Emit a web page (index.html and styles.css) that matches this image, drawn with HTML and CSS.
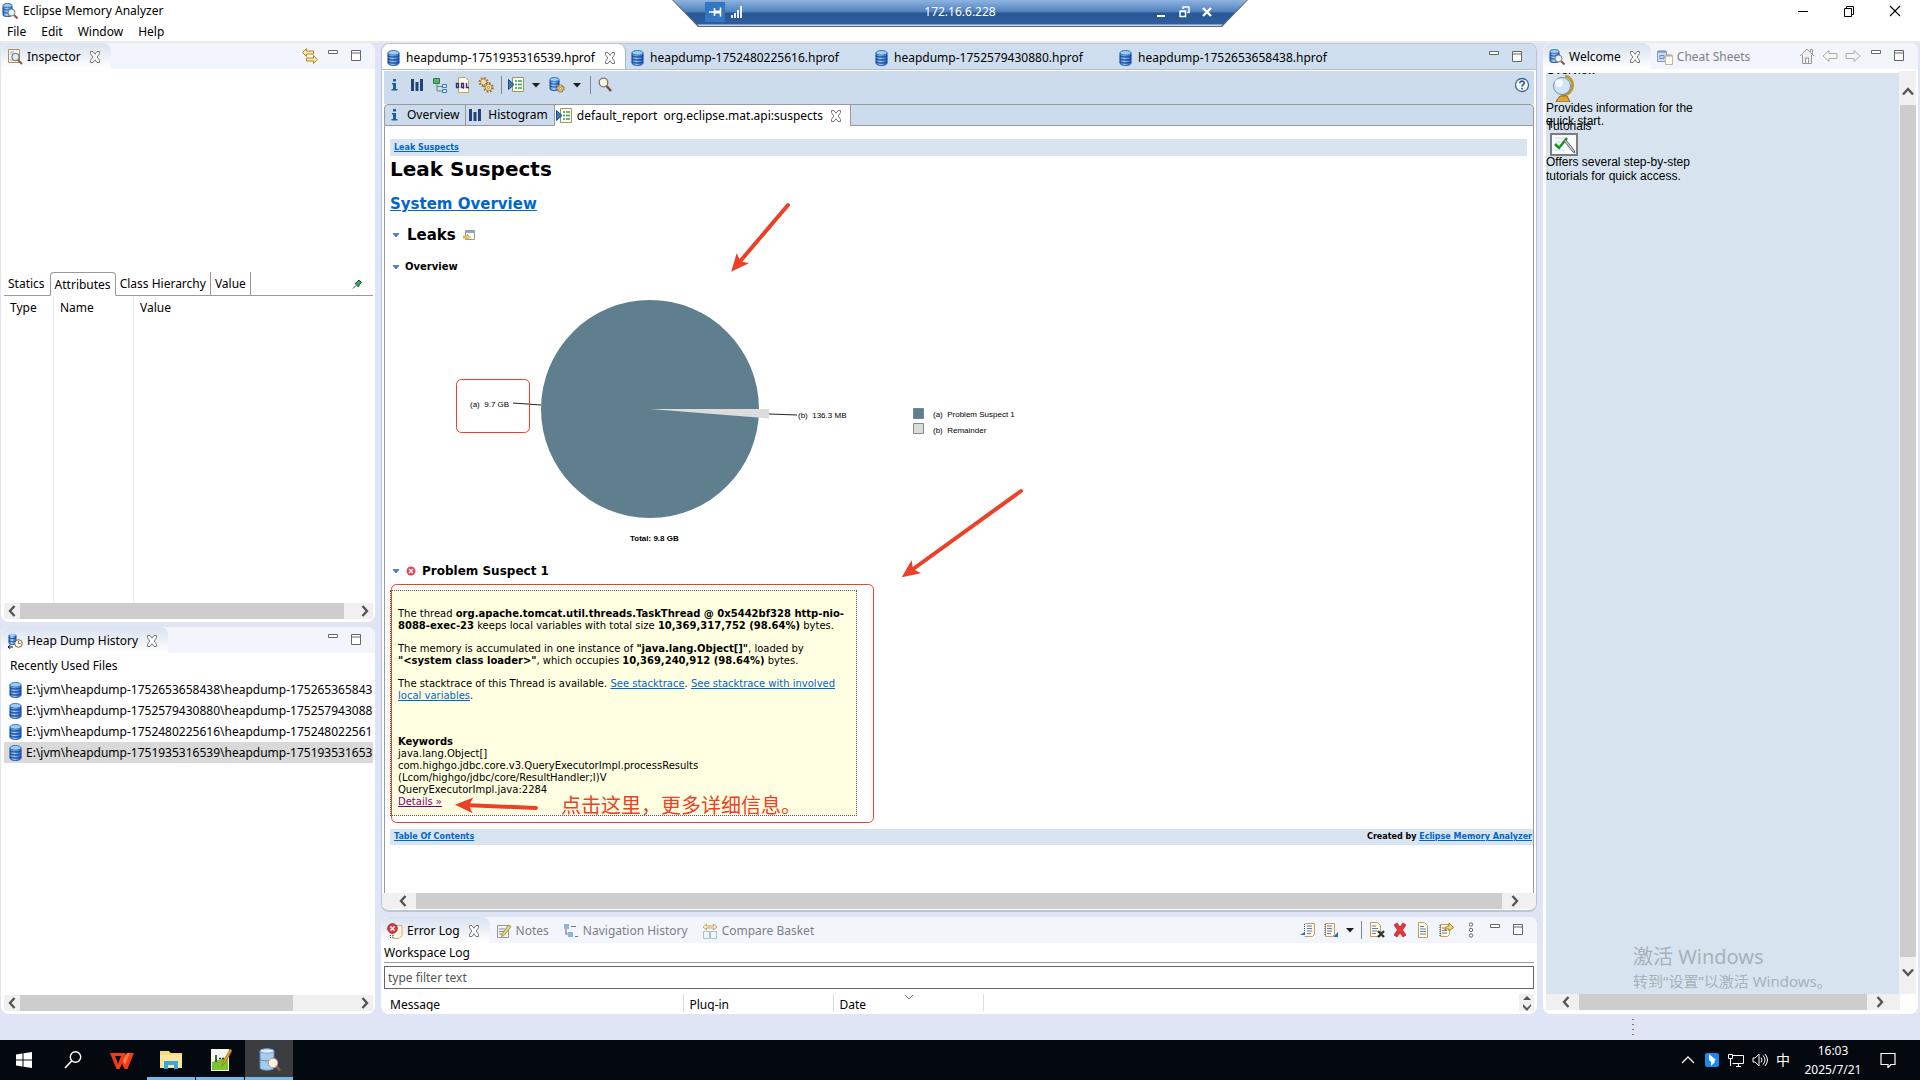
FILE: index.html
```html
<!DOCTYPE html>
<html lang="en">
<head>
<meta charset="utf-8">
<title>Eclipse Memory Analyzer</title>
<link rel="stylesheet" href="styles.css">
</head>
<body>
<svg class="sprite" aria-hidden="true">
  <defs>
    <linearGradient id="g-db" x1="0" x2="1"><stop offset="0" stop-color="#2f74d0"/><stop offset=".4" stop-color="#a9d4f7"/><stop offset="1" stop-color="#1b55b8"/></linearGradient>
    <symbol id="db" viewBox="0 0 16 16"><path d="M2 3v10c0 3.300 11 3.300 11 0V3z" fill="url(#g-db)" stroke="#1a50ae"/><path d="M2 5.500c0 2 11 2 11 0M2 8.500c0 2 11 2 11 0M2 11.500c0 2 11 2 11 0" fill="none" stroke="#174a9f" stroke-width="1.300"/><ellipse cx="7.500" cy="2.800" rx="5.500" ry="2.300" fill="#9fcdee" stroke="#2f74b8"/></symbol>
    <symbol id="dbfind" viewBox="0 0 16 16"><path d="M1 3v9c0 2 9 2 9 0V3z" fill="url(#g-db)" stroke="#1a50ae"/><path d="M1 5.500c0 2 9 2 9 0M1 8.500c0 2 9 2 9 0" fill="none" stroke="#174a9f"/><ellipse cx="5.500" cy="2.500" rx="4.500" ry="2" fill="#9fcdee" stroke="#2f74b8"/><path d="M12 12l3.500 3.500" stroke="#8a5a3a" stroke-width="2"/><circle cx="9.500" cy="9.500" r="3.500" fill="#e3f1fb" stroke="#777"/></symbol>
    <symbol id="dbgear" viewBox="0 0 16 16"><path d="M1 3v9c0 2 9 2 9 0V3z" fill="url(#g-db)" stroke="#1a50ae"/><path d="M1 5.500c0 2 9 2 9 0M1 8.500c0 2 9 2 9 0" fill="none" stroke="#174a9f"/><ellipse cx="5.500" cy="2.500" rx="4.500" ry="2" fill="#9fcdee" stroke="#2f74b8"/><circle cx="11.500" cy="11.500" r="3.700" fill="#f3d79a" stroke="#8b6a2d" stroke-dasharray="1.900 1"/><circle cx="11.500" cy="11.500" r="2.800" fill="#f3d79a" stroke="#a87a30"/><circle cx="11.500" cy="11.500" r="1" fill="#fff" stroke="#8b6a2d" stroke-width=".6"/></symbol>
    <symbol id="dbclock" viewBox="0 0 16 16"><path d="M2 2v8c0 2 7 2 7 0V2z" fill="url(#g-db)" stroke="#1a50ae"/><path d="M2 4.500c0 1.500 7 1.500 7 0M2 7.500c0 1.500 7 1.500 7 0" fill="none" stroke="#174a9f"/><ellipse cx="5.500" cy="1.800" rx="3.500" ry="1.300" fill="#9fcdee"/><circle cx="11.500" cy="10.500" r="3.800" fill="#fff8e4" stroke="#7d6540"/><path d="M11.500 8v2.500h2" fill="none" stroke="#7d6540"/><path d="M1 14h5M3.500 12L1 14l2.500 2" fill="none" stroke="#111"/></symbol>
    <symbol id="inspect" viewBox="0 0 16 16"><path d="M1.500.5h11v13h-11z" fill="#eef4fa" stroke="#b0914e"/><path d="M3 3h4M3 5h3M3 11h4" stroke="#9cb4cf"/><path d="M11 11l4 4" stroke="#8a5a3a" stroke-width="2"/><circle cx="8.500" cy="8" r="3.700" fill="#dfeefa" stroke="#666"/></symbol>
    <symbol id="x" viewBox="0 0 16 16"><path d="M3.500 2.500H6l2 2.800 2-2.800h2.500v2.200L10.200 8l2.300 3.300v2.200H10l-2-2.800-2 2.800H3.500v-2.200L5.800 8 3.500 4.700z" fill="#fff" stroke="#777"/></symbol>
    <symbol id="min" viewBox="0 0 16 16"><path d="M3.500 2.500h9v3h-9z" fill="#fff" stroke="#666"/></symbol>
    <symbol id="max" viewBox="0 0 16 16"><path d="M3.500 2.500h9v10h-9zM3.500 5h9" fill="#fff" stroke="#666"/></symbol>
    <symbol id="sync" viewBox="0 0 16 16"><path d="M.5 4.500L4.500.5v2.500h7v3h-7v2.500zM15.500 11.500l-4-4V10h-7v3h7v2.500z" fill="#fce9a8" stroke="#b4862b"/></symbol>
    <symbol id="info" viewBox="0 0 16 16"><path d="M7 2h3v2.500H7zM6 6h4v6h1.500v1.500h-6V12H7V7.500H6z" fill="#1f5f9f"/></symbol>
    <symbol id="hist" viewBox="0 0 16 16"><path d="M2 2h3v12H2zM6.500 5h3v9h-3zM11 2h3v12h-3z" fill="#23427a"/></symbol>
    <symbol id="tree" viewBox="0 0 16 16"><path d="M5 7v7h5M5 9.500h5" fill="none" stroke="#5e8d7a"/><path d="M1.500 1.500h6v5h-6z" fill="#58b368" stroke="#2d7d46"/><path d="M10.500 7.500h4v3h-4zM10.500 12.500h4v3h-4z" fill="#dcebfa" stroke="#3a78c0"/></symbol>
    <symbol id="oql" viewBox="0 0 16 16"><path d="M3.500.5h7l3 3v12h-10z" fill="#fffdf4" stroke="#c2a562"/><path d="M1.500 6.500h2v4h-2zM6.500 6.500h2v4h-2zM9 11.500L8 10M11.500 6v4.500H14" fill="none" stroke="#35306b" stroke-width="1.400"/></symbol>
    <symbol id="gears" viewBox="0 0 16 16"><g fill="#f6dfae" stroke="#9a7434"><circle cx="5.500" cy="5" r="4" stroke-width="2" stroke-dasharray="1.600 1.540"/><circle cx="5.500" cy="5" r="3" stroke-width=".8"/><circle cx="10.500" cy="10.500" r="4.300" stroke-width="2" stroke-dasharray="1.700 1.680"/><circle cx="10.500" cy="10.500" r="3.300" stroke-width=".8"/><circle cx="10.500" cy="10.500" r="1.200" fill="#fff" stroke-width=".8"/></g></symbol>
    <symbol id="report" viewBox="0 0 16 16"><path d="M4.500.5h11v14h-11z" fill="#fbfdf4" stroke="#a8935a"/><path d="M7 4h2M10 4h4M7 7.500h2M10 7.500h4M7 11h2M10 11h4" stroke="#3c9c60" stroke-width="1.500"/><path d="M.5 2.500L6 7.500l-5.500 5z" fill="#3e78b2" stroke="#1d4c80"/></symbol>
    <symbol id="search" viewBox="0 0 16 16"><path d="M9.500 9l4.500 5" stroke="#7b4b32" stroke-width="2.500"/><circle cx="6.500" cy="5.500" r="4.300" fill="#fbf6dd" stroke="#777" stroke-width="1.300"/></symbol>
    <symbol id="caret" viewBox="0 0 8 8"><path d="M0 2h8L4 6.500z" fill="#1d1d1d"/></symbol>
    <symbol id="help" viewBox="0 0 16 16"><circle cx="8" cy="8" r="6.500" fill="#fff" stroke="#356a9c" stroke-width="1.300"/><path d="M5.800 6.300c0-3 4.600-2.800 4.400-.1C10.100 7.600 8 7.800 8 9.500M8 10.700v1.700" fill="none" stroke="#28598e" stroke-width="1.700"/></symbol>
    <symbol id="pin" viewBox="0 0 16 16"><path d="M4 12.500L7 9.500" stroke="#333"/><path d="M6 7.500l3.500 3.500 1-2.500 2-2-2.500-2.500-2 2z" fill="#37a05a" stroke="#17663a"/></symbol>
    <symbol id="home" viewBox="0 0 16 16"><path d="M1 8l7-7 7 7M3.500 7v8.500h9V7M11.500 4V1.500h2V6M6.500 15v-5h3v5" fill="#eee" stroke="#999"/></symbol>
    <symbol id="back" viewBox="0 0 16 16"><path d="M1 8l6-5.500V5.500h8v5H7v3z" fill="#f6f6f8" stroke="#aaa"/></symbol>
    <symbol id="fwd" viewBox="0 0 16 16"><path d="M15 8L9 2.500V5.500H1v5h8v3z" fill="#f6f6f8" stroke="#aaa"/></symbol>
    <symbol id="sheets" viewBox="0 0 16 16"><path d="M.5 2.500h9v10h-9z" fill="#c9daf4" stroke="#7e9bd0"/><path d="M2 1v3M4 1v3M6 1v3M8 1v3M3 6.500h4v3H3z" fill="none" stroke="#6f86bb"/><path d="M8.500 6.500h7v9h-7z" fill="#fbfaf5" stroke="#c6b893"/><path d="M10 5v3M12 5v3M14 5v3" stroke="#b5a47a"/></symbol>
    <symbol id="errlog" viewBox="0 0 16 16"><path d="M4 2.500h11v10l-3 3H6z" fill="#fcf4de" stroke="#d1b16a"/><circle cx="5.500" cy="5.500" r="4.800" fill="#d53c45" stroke="#a8222e"/><path d="M3.500 3.500l4 4M7.500 3.500l-4 4" stroke="#fff" stroke-width="1.500"/><path d="M3.500 12v3M6 12v3" stroke="#2c58a8" stroke-dasharray="1 1"/></symbol>
    <symbol id="notes" viewBox="0 0 16 16"><path d="M1.500 2.500h11v12h-11z" fill="#f4f4f4" stroke="#999"/><path d="M3 6h6M3 8.500h5M3 11h4" stroke="#889"/><path d="M6 11.500L12.500 2l2.500 1.500-7 9-2.500 1z" fill="#ecdc7a" stroke="#9a9448"/></symbol>
    <symbol id="nav" viewBox="0 0 16 16"><path d="M1 1h5v5H1zM5 9h5v5H5z" fill="#8fb2de"/><path d="M3 6v5h2M8 3.500h5M12 13.500h3" fill="none" stroke="#777" stroke-width="1.200"/></symbol>
    <symbol id="basket" viewBox="0 0 16 16"><path d="M1 4l3.500-3v2h7V1L15 4l-3.500 3V5h-7v2z" fill="#fbf0cf" stroke="#c8a55e"/><path d="M1.500 8.500h6v7h-6zM8.500 8.500h6v7h-6z" fill="#eef7fb" stroke="#a9c5cc"/></symbol>
    <symbol id="logout" viewBox="0 0 16 16"><path d="M5.500 1.500h9v11l-2 2h-8" fill="#fcf6e2" stroke="#c0a25c"/><path d="M7 4h5M7 6.500h5M7 9h5M7 11.500h4" stroke="#5b7fb8"/><path d="M4.500 2v10" stroke="#25477f" stroke-dasharray="1 1"/><path d="M0 13h5v-3z" fill="#2a6db4"/></symbol>
    <symbol id="login" viewBox="0 0 16 16"><path d="M2.500 1.500h9v11l-2 2h-7z" fill="#fcf6e2" stroke="#c0a25c"/><path d="M4 4h5M4 6.500h5M4 9h5M4 11.500h4" stroke="#5b7fb8"/><path d="M2 2v12" stroke="#25477f" stroke-dasharray="1 1"/><path d="M15 10v5h-5z" fill="#2a6db4"/></symbol>
    <symbol id="clear" viewBox="0 0 16 16"><path d="M1.500.5h7l3 3v11h-10z" fill="#fffaea" stroke="#bf9f56"/><path d="M3 4h4M3 6.500h6M3 9h5M3 11.500h4" stroke="#5b7fb8"/><path d="M9 9l6 6M15 9l-6 6" stroke="#333" stroke-width="2.400"/></symbol>
    <symbol id="del" viewBox="0 0 16 16"><path d="M2 3l3-2 3 4 3-4 3 2-3.500 5 3.500 5-3 2-3-4-3 4-3-2 3.500-5z" fill="#e2383c" stroke="#b5202a" stroke-width=".7"/></symbol>
    <symbol id="doc" viewBox="0 0 16 16"><path d="M3.500.5h6l3 3v12h-9z" fill="#fffaea" stroke="#bf9f56"/><path d="M5 4.500h4M5 7h6M5 9.500h6M5 12h6" stroke="#5b7fb8"/></symbol>
    <symbol id="export" viewBox="0 0 16 16"><path d="M2.500 2.500h9v10l-2 2h-7z" fill="#fcf6e2" stroke="#c0a25c"/><path d="M4 6h4M4 8.500h5M4 11h5" stroke="#5b7fb8"/><path d="M2 3v11" stroke="#25477f" stroke-dasharray="1 1"/><path d="M7 8c0-3 2-4 4-4V1l4.500 4.500L11 9V7c-2 0-3 0-4 1z" fill="#f6d56e" stroke="#a97f1e"/></symbol>
    <symbol id="dots" viewBox="0 0 16 16"><g fill="#fff" stroke="#666"><circle cx="8" cy="2.500" r="1.700"/><circle cx="8" cy="8" r="1.700"/><circle cx="8" cy="13.500" r="1.700"/></g></symbol>
    <symbol id="al" viewBox="0 0 16 16"><path d="M10.500 3L6 8l4.500 5" fill="none" stroke="#555" stroke-width="2.400"/></symbol>
    <symbol id="ar" viewBox="0 0 16 16"><path d="M5.500 3L10 8l-4.500 5" fill="none" stroke="#555" stroke-width="2.400"/></symbol>
    <symbol id="au" viewBox="0 0 16 16"><path d="M3 10.500L8 5l5 5.500" fill="none" stroke="#555" stroke-width="2.400"/></symbol>
    <symbol id="ad" viewBox="0 0 16 16"><path d="M3 5.500L8 11l5-5.500" fill="none" stroke="#555" stroke-width="2.400"/></symbol>
    <symbol id="tw" viewBox="0 0 8 8"><path d="M1 2.500h6L4 6z" fill="#3e83bd" stroke="#2a5f94" stroke-width=".6"/></symbol>
    <marker id="head" refX="-9" refY="0" markerWidth="20" markerHeight="20" markerUnits="userSpaceOnUse" orient="auto" overflow="visible"><path d="M0 0L-18-8-14 0-18 8z" fill="#ec4127"/></marker>
  </defs>
</svg>

<header class="titlebar">
  <div class="title"><svg class="i"><use href="#dbfind"/></svg><span>Eclipse Memory Analyzer</span></div>
  <div class="wincontrols">
    <button aria-label="Minimize"><svg class="i" viewBox="0 0 16 16"><path d="M3 8.500h10" stroke="#000"/></svg></button>
    <button aria-label="Restore"><svg class="i" viewBox="0 0 16 16"><path d="M3.500 5.500h7v8h-7zM5.500 5V3.500h7v8H11" fill="none" stroke="#000"/></svg></button>
    <button aria-label="Close"><svg class="i" viewBox="0 0 16 16"><path d="M3 3l10 10M13 3L3 13" stroke="#000" stroke-width="1.200"/></svg></button>
  </div>
</header>
<nav class="menubar"><button>File</button><button>Edit</button><button>Window</button><button>Help</button></nav>

<div class="remote">
  <div class="remote-in">
    <div class="remote-l"><button class="pinned" aria-label="Pin"><svg class="i" viewBox="0 0 16 16"><path d="M2 8h5M7.500 4v8M8 8h5M13.500 3.500v9" stroke="#fff" stroke-width="1.600"/><path d="M8 6.500h6v3H8z" fill="#fff"/></svg></button><svg class="i" viewBox="0 0 16 16"><path d="M3 14v-3M6 14V9M9 14V6M12 14V2" stroke="#fff" stroke-width="1.800"/></svg></div>
    <span>172.16.6.228</span>
    <div class="remote-r">
      <button aria-label="Minimize session"><svg class="i" viewBox="0 0 16 16"><path d="M4 12h8" stroke="#fff" stroke-width="2"/></svg></button>
      <button aria-label="Restore session"><svg class="i" viewBox="0 0 16 16"><path d="M4 7.500h5.500v5H4zM7 5V3h6v5.500h-2M4 7h6" fill="none" stroke="#fff" stroke-width="1.500"/></svg></button>
      <button aria-label="Close session"><svg class="i" viewBox="0 0 16 16"><path d="M4 4l8 8M12 4l-8 8" stroke="#fff" stroke-width="2.400"/></svg></button>
    </div>
  </div>
</div>

<main class="workbench">
  <div class="col left">
    <section class="pane inspector">
      <div class="tabbar"><button class="tab on"><svg class="i"><use href="#inspect"/></svg>Inspector<svg class="i x"><use href="#x"/></svg></button>
        <div class="tools"><button aria-label="Link"><svg class="i"><use href="#sync"/></svg></button><button aria-label="Minimize view"><svg class="i"><use href="#min"/></svg></button><button aria-label="Maximize view"><svg class="i"><use href="#max"/></svg></button></div></div>
      <div class="blank"></div>
      <div class="subtabs"><button>Statics</button><button class="on">Attributes</button><button>Class Hierarchy</button><button class="ends">Value</button><svg class="i push"><use href="#pin"/></svg></div>
      <table class="attrs"><thead><tr><th>Type</th><th>Name</th><th>Value</th></tr></thead><tbody><tr><td></td><td></td><td></td></tr></tbody></table>
      <div class="hscroll"><svg class="i"><use href="#al"/></svg><div class="track"><div class="thumb t1"></div></div><svg class="i"><use href="#ar"/></svg></div>
    </section>
    <section class="pane history">
      <div class="tabbar"><button class="tab on"><svg class="i"><use href="#dbclock"/></svg>Heap Dump History<svg class="i x"><use href="#x"/></svg></button>
        <div class="tools"><button aria-label="Minimize view"><svg class="i"><use href="#min"/></svg></button><button aria-label="Maximize view"><svg class="i"><use href="#max"/></svg></button></div></div>
      <h2>Recently Used Files</h2>
      <ul>
        <li><svg class="i"><use href="#db"/></svg>E:\jvm\heapdump-1752653658438\heapdump-1752653658438.hprof</li>
        <li><svg class="i"><use href="#db"/></svg>E:\jvm\heapdump-1752579430880\heapdump-1752579430880.hprof</li>
        <li><svg class="i"><use href="#db"/></svg>E:\jvm\heapdump-1752480225616\heapdump-1752480225616.hprof</li>
        <li class="on"><svg class="i"><use href="#db"/></svg>E:\jvm\heapdump-1751935316539\heapdump-1751935316539.hprof</li>
      </ul>
      <div class="hscroll end"><svg class="i"><use href="#al"/></svg><div class="track"><div class="thumb t2"></div></div><svg class="i"><use href="#ar"/></svg></div>
    </section>
  </div>

  <div class="col center">
    <section class="pane editor">
      <div class="tabbar files">
        <button class="tab file on"><svg class="i"><use href="#db"/></svg>heapdump-1751935316539.hprof<svg class="i x"><use href="#x"/></svg></button>
        <button class="tab file"><svg class="i"><use href="#db"/></svg>heapdump-1752480225616.hprof</button>
        <button class="tab file"><svg class="i"><use href="#db"/></svg>heapdump-1752579430880.hprof</button>
        <button class="tab file"><svg class="i"><use href="#db"/></svg>heapdump-1752653658438.hprof</button>
        <div class="tools"><button aria-label="Minimize editor"><svg class="i"><use href="#min"/></svg></button><button aria-label="Maximize editor"><svg class="i"><use href="#max"/></svg></button></div>
      </div>
      <div class="toolbar">
        <button aria-label="Overview"><svg class="i"><use href="#info"/></svg></button><button aria-label="Histogram"><svg class="i"><use href="#hist"/></svg></button><button aria-label="Dominator tree"><svg class="i"><use href="#tree"/></svg></button><button aria-label="OQL"><svg class="i"><use href="#oql"/></svg></button><button aria-label="Thread overview"><svg class="i"><use href="#gears"/></svg></button>
        <i class="sep"></i>
        <button class="drop" aria-label="Run report"><svg class="i"><use href="#report"/></svg><svg class="c"><use href="#caret"/></svg></button><button class="drop" aria-label="Query browser"><svg class="i"><use href="#dbgear"/></svg><svg class="c"><use href="#caret"/></svg></button>
        <i class="sep"></i>
        <button aria-label="Find"><svg class="i"><use href="#search"/></svg></button>
        <button class="push" aria-label="Help"><svg class="i"><use href="#help"/></svg></button>
      </div>
      <div class="pagetabs">
        <button><svg class="i"><use href="#info"/></svg>Overview</button><button><svg class="i"><use href="#hist"/></svg>Histogram</button><button class="on"><svg class="i"><use href="#report"/></svg>default_report&nbsp; org.eclipse.mat.api:suspects<svg class="i x"><use href="#x"/></svg></button>
      </div>
      <article class="report">
        <div class="crumb"><a href="#leaks">Leak Suspects</a></div>
        <h1>Leak Suspects</h1>
        <h2><a href="#system">System Overview</a></h2>
        <h2 class="fold" id="leaks"><svg class="c"><use href="#tw"/></svg>Leaks<svg class="m" viewBox="0 0 12 12"><path d="M2.500 1.500h9v9h-9z" fill="#fff" stroke="#a99a76"/><path d="M2 2h10v2H2z" fill="#7fa9d8"/><path d="M0 7h4V5l3.500 3L4 11V9H0z" fill="#f3cf6b" stroke="#b98a2c" stroke-width=".6"/></svg></h2>
        <h4 class="fold"><svg class="c"><use href="#tw"/></svg>Overview</h4>
        <svg class="chart" width="700" height="260" viewBox="390 290 700 260" role="img" aria-label="Leak suspects by retained size">
          <circle cx="650" cy="409" r="109" fill="#607f8e"/>
          <path d="M650 409H769V418.500z" fill="#dcdcdc"/>
          <path d="M513 403l28 2M769 414l28 1" stroke="#222"/>
          <g class="lbl"><text x="470" y="407">(a)&#160; 9.7 GB</text><text x="798" y="418">(b)&#160; 136.3 MB</text><text x="933" y="417">(a)&#160; Problem Suspect 1</text><text x="933" y="433">(b)&#160; Remainder</text><text x="630" y="541" font-weight="bold">Total: 9.8 GB</text></g>
          <path d="M913.500 408.500h10v10h-10z" fill="#607f8e" stroke="#6d8a98"/><path d="M913.500 423.500h10v10h-10z" fill="#dcdcdc" stroke="#888"/>
        </svg>
        <h3 class="fold"><svg class="c"><use href="#tw"/></svg><svg class="m" viewBox="0 0 12 12"><circle cx="6" cy="6" r="4.500" fill="#de4a54"/><path d="M4 4l4 4M8 4L4 8" stroke="#fff" stroke-width="1.300"/></svg>Problem Suspect 1</h3>
        <div class="suspect">
          <p>The thread <b>org.apache.tomcat.util.threads.TaskThread @ 0x5442bf328 http-nio-<br>8088-exec-23</b> keeps local variables with total size <b>10,369,317,752 (98.64%)</b> bytes.</p>
          <p>The memory is accumulated in one instance of <b>"java.lang.Object[]"</b>, loaded by<br><b>"&lt;system class loader&gt;"</b>, which occupies <b>10,369,240,912 (98.64%)</b> bytes.</p>
          <p>The stacktrace of this Thread is available. <a href="#stack">See stacktrace</a>. <a href="#locals">See stacktrace with involved<br>local variables</a>.</p>
          <div class="keys"><b>Keywords</b><br>java.lang.Object[]<br>com.highgo.jdbc.core.v3.QueryExecutorImpl.processResults<br>(Lcom/highgo/jdbc/core/ResultHandler;I)V<br>QueryExecutorImpl.java:2284<br><a class="seen" href="#details">Details »</a></div>
        </div>
        <footer><a href="#toc">Table Of Contents</a><span>Created by <a href="#mat">Eclipse Memory Analyzer</a></span></footer>
        <svg class="marks" width="700" height="720" viewBox="385 126 700 720">
          <g fill="none" stroke="#ec4127"><rect x="456.500" y="379.500" width="73" height="53" rx="5"/><rect x="391.500" y="584.500" width="482" height="238" rx="5"/></g>
          <g stroke="#ec4127" stroke-width="4" stroke-linecap="round"><path d="M788 205L737 265" marker-end="url(#head)"/><path d="M1021 491L909 572" marker-end="url(#head)"/><path d="M536 808L464 805" marker-end="url(#head)"/></g>
          <text x="561" y="813">点击这里，更多详细信息。</text>
        </svg>
      </article>
      <div class="hscroll big"><svg class="i"><use href="#al"/></svg><div class="track"><div class="thumb"></div></div><svg class="i"><use href="#ar"/></svg></div>
    </section>
    <section class="pane log">
      <div class="tabbar"><button class="tab on"><svg class="i"><use href="#errlog"/></svg>Error Log<svg class="i x"><use href="#x"/></svg></button><button class="tab"><svg class="i"><use href="#notes"/></svg>Notes</button><button class="tab"><svg class="i"><use href="#nav"/></svg>Navigation History</button><button class="tab"><svg class="i"><use href="#basket"/></svg>Compare Basket</button>
        <div class="tools"><button aria-label="Export log"><svg class="i"><use href="#logout"/></svg></button><button aria-label="Import log"><svg class="i"><use href="#login"/></svg></button><svg class="c"><use href="#caret"/></svg><i class="sep"></i><button aria-label="Clear"><svg class="i"><use href="#clear"/></svg></button><button aria-label="Delete"><svg class="i"><use href="#del"/></svg></button><button aria-label="Open log"><svg class="i"><use href="#doc"/></svg></button><button aria-label="Restore log"><svg class="i"><use href="#export"/></svg></button><button class="more" aria-label="View menu"><svg class="i"><use href="#dots"/></svg></button><button aria-label="Minimize view"><svg class="i"><use href="#min"/></svg></button><button aria-label="Maximize view"><svg class="i"><use href="#max"/></svg></button></div></div>
      <label for="filter">Workspace Log</label>
      <input id="filter" type="text" placeholder="type filter text">
      <div class="logrow"><table><thead><tr><th>Message</th><th>Plug-in</th><th class="sorted">Date<svg class="c" viewBox="0 0 8 8"><path d="M0 1l4 4 4-4" fill="none" stroke="#777"/></svg></th><th></th></tr></thead></table><div class="spin"><svg class="c" viewBox="0 0 8 8"><path d="M0 6l4-4 4 4z" fill="#555"/></svg><svg class="c" viewBox="0 0 8 8"><path d="M0 1l4 4 4-4v2L4 8 0 4z" fill="#555"/></svg></div></div>
    </section>
  </div>

  <section class="pane welcome">
    <div class="tabbar"><button class="tab on"><svg class="i"><use href="#dbfind"/></svg>Welcome<svg class="i x"><use href="#x"/></svg></button><button class="tab"><svg class="i"><use href="#sheets"/></svg>Cheat Sheets</button>
      <div class="tools"><button aria-label="Home"><svg class="i"><use href="#home"/></svg></button><button aria-label="Back"><svg class="i"><use href="#back"/></svg></button><button aria-label="Forward"><svg class="i"><use href="#fwd"/></svg></button><button aria-label="Minimize view"><svg class="i"><use href="#min"/></svg></button><button aria-label="Maximize view"><svg class="i"><use href="#max"/></svg></button></div></div>
    <div class="browser">
      <div class="intro">
        <h3>Overview</h3>
        <svg width="34" height="27" viewBox="0 0 34 27"><path d="M19 1c11 2 10 19-3 19" fill="none" stroke="#c8962f" stroke-width="3"/><path d="M11 25l3-4h7l2 4 1 2H10z" fill="#d9a63a" stroke="#8d6516"/><circle cx="16" cy="11" r="8.500" fill="#cfe5f7" stroke="#6f8fa8"/><circle cx="13" cy="8" r="4" fill="#f3faff"/></svg>
        <p>Provides information for the<br>quick start.</p>
        <h3 class="over">Tutorials</h3>
        <svg width="34" height="23" viewBox="0 0 34 23"><path d="M5 1h26v21H5z" fill="#f8fcff" stroke="#7d7d7d" stroke-width="2"/><path d="M9 5h11M9 9h9M9 13h4M9 17h10" stroke="#cddae4"/><path d="M9 11l4 4 8-10" fill="none" stroke="#159420" stroke-width="2.500"/><path d="M18 8l9 11 2 1-1-3-8-10z" fill="#c7cdd0" stroke="#666"/></svg>
        <p class="loose">Offers several step-by-step<br>tutorials for quick access.</p>
      </div>
      <div class="vscroll"><svg class="i"><use href="#au"/></svg><div class="vthumb"></div><svg class="i"><use href="#ad"/></svg></div>
    </div>
    <div class="hscroll big"><svg class="i"><use href="#al"/></svg><div class="track"><div class="thumb"></div></div><svg class="i"><use href="#ar"/></svg></div>
    <div class="activate"><strong>激活 Windows</strong><span>转到“设置”以激活 Windows。</span></div>
  </section>
</main>
<div class="status"><i></i></div>
<footer class="taskbar">
  <button aria-label="Start"><svg viewBox="0 0 24 24"><path d="M4 6.500L10.500 5.500V11.500H4zM11.500 5.300L20 4v7.500h-8.500zM4 12.500h6.500v6L4 17.500zM11.500 12.500H20V20l-8.500-1.300z" fill="#fff"/></svg></button>
  <button aria-label="Search"><svg viewBox="0 0 24 24"><circle cx="14.500" cy="9" r="5.200" fill="none" stroke="#fff" stroke-width="1.400"/><path d="M10.800 12.800L4 20" stroke="#fff" stroke-width="1.600"/></svg></button>
  <button aria-label="WPS Office"><svg viewBox="0 0 24 24"><path d="M0 5h15l1.500 3L20 5h4l-6.500 16h-3L12 15.500 9.500 21h-3zM5 8l3 8 3-8z" fill="#f5391c" fill-rule="evenodd"/><path d="M13 12.500L17 5h3l-5 12z" fill="#ff7a3c"/></svg></button>
  <button class="run" aria-label="File Explorer"><svg viewBox="0 0 24 24"><path d="M1 3h9l1.500 2H23v15H1z" fill="#f9d978"/><path d="M1 7h22v13H1z" fill="#fce69b"/><path d="M5 13h14v8h-4v-4H9v4H5z" fill="#3aa7e0"/></svg></button>
  <button class="run" aria-label="Text editor"><svg viewBox="0 0 24 24"><path d="M3 1h18v22H3z" fill="#f4f7ee"/><path d="M4 14l16-5v13H4z" fill="#79c52f"/><path d="M8 7v7M11 10.500h2M14 10.500h2" stroke="#333" stroke-width="1.600"/><path d="M14 18l1-4L22 1l2 1.500L17 15z" fill="#e79a33" stroke="#a35d16" stroke-width=".6"/></svg></button>
  <button class="run on" aria-label="Memory Analyzer"><svg viewBox="0 0 24 24"><path d="M3 3v17c0 3 14 3 14 0V3z" fill="#a9cbed" stroke="#5a86b8"/><path d="M3 11c0 2.500 14 2.500 14 0" fill="none" stroke="#5a86b8"/><ellipse cx="10" cy="3" rx="7" ry="2.200" fill="#dcedfb" stroke="#7ba4cf"/><path d="M19 18l4 4.500" stroke="#8b5b44" stroke-width="2.600"/><circle cx="16" cy="15" r="4.800" fill="#f7f1de" stroke="#9b9b9b"/></svg></button>
  <div class="tray">
    <svg viewBox="0 0 16 16"><path d="M2 11l6-6 6 6" fill="none" stroke="#fff" stroke-width="1.300"/></svg>
    <svg viewBox="0 0 16 16"><rect x="1" y="1" width="14" height="14" rx="2" fill="#1889ee"/><path d="M5 2l7 6-2 1 1 1-4 4v-4L5 8z" fill="#fff"/></svg>
    <svg viewBox="0 0 16 16"><path d="M4.500 3.500h11v8h-11M8 14.500h5M10.500 12v2M.5 2.500h4v4h-4zM2.500 7v7" fill="none" stroke="#fff"/></svg>
    <svg viewBox="0 0 16 16"><path d="M1 6h2l4-4v12l-4-4H1zM9 5.500q2 2.500 0 5M11 3.500q4 4.500 0 9M13 2q5 6 0 12" fill="none" stroke="#fff"/></svg>
    <span class="ime">中</span>
    <time><span>16:03</span><span>2025/7/21</span></time>
    <svg class="note" viewBox="0 0 16 16"><path d="M1 1.500h14v11h-4L8 15.500V12.500H1z" fill="none" stroke="#fff" stroke-width="1.200"/></svg>
  </div>
</footer>
</body>
</html>
```
FILE: styles.css
```css
* { box-sizing: border-box; }
html, body { height: 100%; }
body {
  margin: 0;
  display: flex;
  flex-direction: column;
  min-height: 100vh;
  overflow: hidden;
  background: #e0e5f5;
  color: #000;
  font: 12px/18px "Noto Sans", "Noto Sans CJK SC", sans-serif;
}
button { display: flex; align-items: center; padding: 0; border: 0; background: none; font: inherit; color: inherit; white-space: nowrap; }
h1, h2, h3, h4, p, ul { margin: 0; padding: 0; font-weight: normal; font-size: inherit; }
.sprite { position: absolute; width: 0; height: 0; }
.i { width: 16px; height: 16px; flex: none; display: block; }
.c { width: 8px; height: 8px; flex: none; display: block; }
.m { width: 12px; height: 12px; flex: none; display: block; }
.push { margin-left: auto; }

/* window frame */
.titlebar, .menubar { background: #fff; display: flex; flex: none; }
.titlebar { height: 22px; justify-content: space-between; }
.title { display: flex; gap: 5px; align-items: center; padding-left: 2px; }
.wincontrols { display: flex; gap: 30px; align-items: center; padding-right: 17px; }
.menubar { height: 21px; gap: 15px; padding: 0 7px; border-bottom: 2px solid #eaebee; }
.remote { position: absolute; top: 0; left: 35%; width: 30%; height: 27px; background: #5d6570; clip-path: polygon(0 0, 100% 0, calc(100% - 26px) 100%, 26px 100%); }
.remote-in { height: 26px; margin: 0 1px; padding: 0 32px 2px; display: grid; grid-template-columns: 1fr auto 1fr; align-items: center; color: #fff; background: linear-gradient(#8fb3e0, #4d80bd 46%, #285693 50%, #2c5e9f 92%, #c0d2ea 96%); clip-path: polygon(0 0, 100% 0, calc(100% - 26px) 100%, 26px 100%); }
.remote-l, .remote-r { display: flex; gap: 4px; align-items: center; }
.remote-r { justify-content: flex-end; gap: 7px; }
.pinned { width: 20px; height: 20px; justify-content: center; background: #3377c0; }

/* panes */
.workbench { flex: 1; min-height: 0; display: grid; grid-template-columns: minmax(0, 374fr) minmax(0, 1156fr) minmax(0, 375fr); gap: 6px; padding: 0 2px 0 1px; }
.col { display: flex; flex-direction: column; gap: 5px; min-height: 0; }
.pane { background: #fff; border-radius: 8px; overflow: hidden; display: flex; flex-direction: column; min-height: 0; position: relative; }
.inspector { flex: 579 1 0; }
.history { flex: 387 1 0; }
.editor { flex: 869 1 0; border: 1px solid #bcc3d2; border-bottom-width: 2px; }
.log { flex: 97 1 0; }
.tabbar { flex: none; display: flex; height: 26px; background: #f3f5fc; }
.tab { padding: 2px 8px 0 6px; gap: 4px; color: #7b7f88; }
.tab.on { color: #000; background: linear-gradient(#d8e2ef, #fff); border-radius: 8px 8px 0 0; }
.tab .x { margin-left: 2px; }
.tools { margin-left: auto; display: flex; gap: 7px; padding-right: 11px; align-items: center; }
.sep { width: 1px; height: 18px; background: #7d8794; flex: none; }
.more { margin: 0 1px 0 2px; }

.blank { flex: 204 1 0; }
.subtabs { flex: none; display: flex; align-items: stretch; height: 24px; margin: 0 2px 0 3px; border-bottom: 1px solid #9a9a9a; }
.subtabs button { padding: 1px 4px 0; border-right: 1px solid transparent; }
.subtabs .on { border: 1px solid #9a9a9a; border-bottom-color: #fff; border-radius: 4px 4px 0 0; margin-bottom: -1px; background: #fff; }
.subtabs button:nth-child(3), .subtabs .ends { border-right-color: #9a9a9a; }
.subtabs .i { align-self: center; margin-right: 8px; }
.attrs { flex: 308 1 0; display: grid; grid-template-rows: 25px 1fr; margin: 0 2px 0 3px; }
.attrs thead, .attrs tbody { display: grid; }
.attrs tr { display: grid; grid-template-columns: 50px 80px 1fr; }
.attrs th, .attrs td { padding: 3px 6px; text-align: left; font-weight: normal; border-right: 1px solid #e3eefa; }
.attrs th:last-child, .attrs td:last-child { border-right: 0; }
.hscroll { flex: none; display: flex; height: 16px; margin: 0 2px 3px 3px; background: #f0f0f0; }
.track { flex: 1; }
.thumb { height: 16px; background: #cdcdcd; }
.t1 { width: 96%; }
.t2 { width: 81%; }
.hscroll.big { padding: 0 13px; margin: 0 0 1px; gap: 5px; }
.history h2 { padding: 4px 9px; flex: none; }
.history ul { list-style: none; margin: 0 2px 0 3px; }
.history li { display: flex; align-items: center; gap: 2px; height: 21px; padding-left: 4px; white-space: nowrap; overflow: hidden; }
.history li.on { background: #d9d9d9; }
.end { margin-top: auto; }

/* editor */
.files { background: #cfdeee; border-bottom: 1px solid #b3bdd0; height: 26px; }
.file { width: 244px; padding: 2px 7px 0 4px; color: #000; gap: 4px; }
.file .x { margin-left: auto; }
.file.on { background: #fff; border-right: 1px solid #a9b4c8; }
.toolbar { flex: none; display: flex; align-items: center; gap: 7px; height: 33px; margin: 1px 2px 0; padding: 0 3px 6px 2px; background: #ccdcec; }
.toolbar button { gap: 8px; }
.toolbar .sep { margin: 0 -1px 0 0; }
.toolbar .drop { padding-right: 2px; }
.toolbar .push { margin-right: 1px; }
.pagetabs { flex: none; display: flex; height: 22px; margin: 0 2px; background: #ccdcec; border: 1px solid #9a9a9a; border-radius: 4px 4px 0 0; }
.pagetabs button { padding: 0 6px 0 1px; gap: 5px; border-right: 1px solid #9a9a9a; }
.pagetabs .on { background: #fff; margin-bottom: -1px; }
.report { flex: 1; min-height: 0; position: relative; margin: 0 2px; padding: 13px 0 0 5px; border-left: 1px solid #9a9a9a; border-right: 1px solid #9a9a9a; font: 10px/12px "DejaVu Sans", sans-serif; overflow: hidden; }
a { color: #0066cc; }
.crumb { height: 17px; margin-right: 6px; padding: 3px 4px; background: #d9e4f1; font-size: 8px; font-weight: bold; }
h1, .report h2, .report h3, .report h4 { font-weight: bold; }
.report h1 { font-size: 20px; line-height: 26px; }
.report h2 { font-size: 15px; line-height: 20px; margin-top: 12px; }
.report h2.fold { margin-top: 11px; gap: 7px; }
.report h4 { font-size: 10px; line-height: 12px; margin: 16px 0 17px; }
.report h3 { font-size: 12px; line-height: 16px; margin-top: 13px; }
.fold { display: flex; align-items: center; gap: 5px; padding-left: 2px; }
.chart { display: block; }
.lbl { font: 8px "Liberation Sans", sans-serif; }
.suspect { width: 467px; height: 226px; margin-top: 11px; padding: 17px 6px 0 7px; border: 1px dotted #555; background: #ffffe1; white-space: nowrap; }
.suspect p { margin-bottom: 11px; }
.keys { padding-top: 23px; }
.seen { color: #800080; }
.report footer { display: flex; justify-content: space-between; align-items: center; height: 16px; margin-top: 13px; padding: 0 1px 0 4px; background: #d9e4f1; font-size: 8px; font-weight: bold; }
.marks { position: absolute; left: 0; top: 0; font: 20px "Noto Sans CJK SC", sans-serif; fill: #ec4127; }

/* log */
.log label { flex: none; margin: 0 3px; height: 20px; padding-top: 1px; border-bottom: 1px solid #9a9a9a; }
.log input { flex: none; height: 23px; margin: 3px 3px 5px; padding: 0 3px; border: 1px solid #666; font: inherit; color: #555; }
.log input::placeholder { color: #555; opacity: 1; }
.logrow { display: flex; flex: none; height: 17px; margin: 0 3px; overflow: hidden; }
.logrow table { flex: 1; border-collapse: collapse; table-layout: fixed; }
.logrow th { padding: 2px 6px 0; text-align: left; font-weight: normal; border-right: 1px solid #ddd; position: relative; line-height: 18px; }
.logrow th:nth-child(1) { width: 299px; }
.logrow th:nth-child(2), .logrow th:nth-child(3) { width: 150px; }
.logrow th:last-child { border: 0; }
.sorted .c { position: absolute; top: 0; left: 48%; }
.spin { width: 15px; background: #f0f0f0; display: flex; flex-direction: column; align-items: center; justify-content: flex-end; gap: 1px; }

/* welcome */
.browser { flex: 1; min-height: 0; display: flex; margin: 2px 2px 0 3px; background: #f0f0f0; }
.intro { flex: 1; background: #d7e4ef; border-top: 2px solid #fff; font: 12px/13px "Liberation Sans", sans-serif; overflow: hidden; }
.intro svg { display: block; }
.intro h3 { margin-top: -9px; height: 11px; }
.intro h3.over { margin: -8px 0 0; height: 13px; }
.intro .loose { line-height: 14px; margin-top: -1px; }
.vscroll { width: 17px; padding-top: 13px; display: flex; flex-direction: column; align-items: center; }
.vthumb { flex: 1; width: 16px; margin: 5px 0 7px; background: #cdcdcd; }
.vscroll .i:last-child { margin-bottom: 14px; }
.welcome .hscroll { margin: 0 18px 4px 3px; padding: 0 12px; }
.activate { position: absolute; left: 24%; bottom: 21px; display: flex; flex-direction: column; color: #a9b1b8; font-size: 15px; line-height: 24px; }
.activate strong { font-weight: normal; font-size: 20px; line-height: 24px; }

.status { flex: none; height: 26px; }
.status i { display: block; width: 2px; height: 16px; margin: 5px 0 0 85%; background: repeating-linear-gradient(#777 0 1px, transparent 1px 5px); }
.taskbar { flex: none; display: flex; gap: 1px; height: 40px; background: #04080f; color: #fff; }
.taskbar button { width: 48px; justify-content: center; border-bottom: 3px solid transparent; border-top: 3px solid transparent; }
.taskbar button svg { width: 24px; height: 24px; }
.taskbar .run { border-bottom-color: #76b9ed; }
.taskbar .on { background: #3c3d40; border-top-color: #3c3d40; }
.tray { margin-left: auto; display: flex; align-items: center; gap: 8px; padding-right: 24px; }
.tray svg { width: 16px; height: 16px; }
.ime { width: 16px; font-size: 14px; }
time { width: 66px; margin-right: 6px; font-size: 12px; line-height: 19px; display: flex; flex-direction: column; text-align: center; }
```
